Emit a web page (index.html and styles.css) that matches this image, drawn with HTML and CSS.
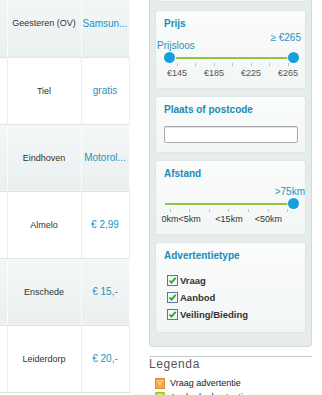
FILE: index.html
```html
<!DOCTYPE html>
<html lang="nl">
  <head>
    <meta charset="UTF-8" />
    <meta name="viewport" content="width=device-width, initial-scale=1.0" />
    <title>Advertenties</title>
    <link rel="stylesheet" href="styles.css">
  </head>
  <body>
    <div class="results">
      <table class="ads">
        <colgroup>
          <col class="col-thumb" />
          <col class="col-place" />
          <col class="col-price" />
        </colgroup>
        <tr class="odd">
          <td></td>
          <td class="place">Geesteren (OV)</td>
          <td class="price"><a href="#">Samsun...</a></td>
        </tr>
        <tr>
          <td></td>
          <td class="place">Tiel</td>
          <td class="price"><a href="#">gratis</a></td>
        </tr>
        <tr class="odd">
          <td></td>
          <td class="place">Eindhoven</td>
          <td class="price"><a href="#">Motorol...</a></td>
        </tr>
        <tr>
          <td></td>
          <td class="place">Almelo</td>
          <td class="price"><a href="#">€ 2,99</a></td>
        </tr>
        <tr class="odd">
          <td></td>
          <td class="place">Enschede</td>
          <td class="price"><a href="#">€ 15,-</a></td>
        </tr>
        <tr>
          <td></td>
          <td class="place">Leiderdorp</td>
          <td class="price"><a href="#">€ 20,-</a></td>
        </tr>
      </table>
    </div>

    <div class="side">
      <div class="filters">
        <div class="box box-top"></div>

        <!-- Prijs -->
        <div class="box">
          <h3>Prijs</h3>
          <div class="range-max">≥ €265</div>
          <div class="range-min">Prijsloos</div>
          <div class="slider price-slider">
            <div class="track"></div>
            <span class="knob knob-left"></span>
            <span class="knob knob-right"></span>
          </div>
          <div class="ticks price-ticks">
            <span></span><span></span><span></span><span></span><span></span><span></span><span></span>
          </div>
          <div class="ticks price-ticks labels grey">
            <span>€145</span><span></span><span>€185</span><span></span><span>€225</span><span></span><span>€265</span>
          </div>
        </div>

        <!-- Plaats -->
        <div class="box">
          <h3>Plaats of postcode</h3>
          <input type="text" class="place-input" />
        </div>

        <!-- Afstand -->
        <div class="box">
          <h3>Afstand</h3>
          <div class="range-max flush">&gt;75km</div>
          <div class="slider km-slider">
            <div class="track"></div>
            <span class="knob knob-right"></span>
          </div>
          <div class="ticks km-ticks">
            <span></span><span></span><span></span><span></span><span></span><span></span><span></span>
          </div>
          <div class="ticks km-ticks labels">
            <span>0km</span><span>&lt;5km</span><span></span><span>&lt;15km</span><span></span><span>&lt;50km</span><span></span>
          </div>
        </div>

        <!-- Advertentietype -->
        <div class="box">
          <h3>Advertentietype</h3>
          <ul class="checks">
            <li>
              <svg class="check" width="11" height="11" viewBox="0 0 11 11"><rect x="0.5" y="0.5" width="10" height="10" fill="#f4f6f8" stroke="#5b7893"/><path d="M2.5 5.5 L4.5 7.6 L8.6 2.8" fill="none" stroke="#2ea52e" stroke-width="1.8"/></svg>
              Vraag
            </li>
            <li>
              <svg class="check" width="11" height="11" viewBox="0 0 11 11"><rect x="0.5" y="0.5" width="10" height="10" fill="#f4f6f8" stroke="#5b7893"/><path d="M2.5 5.5 L4.5 7.6 L8.6 2.8" fill="none" stroke="#2ea52e" stroke-width="1.8"/></svg>
              Aanbod
            </li>
            <li>
              <svg class="check" width="11" height="11" viewBox="0 0 11 11"><rect x="0.5" y="0.5" width="10" height="10" fill="#f4f6f8" stroke="#5b7893"/><path d="M2.5 5.5 L4.5 7.6 L8.6 2.8" fill="none" stroke="#2ea52e" stroke-width="1.8"/></svg>
              Veiling/Bieding
            </li>
          </ul>
        </div>
      </div>

      <div class="legend">
        <h4>Legenda</h4>
        <div class="legend-item"><span class="tag tag-v">V</span>Vraag advertentie</div>
        <div class="legend-item"><span class="tag tag-a">A</span>Aanbod advertentie</div>
      </div>
    </div>
  </body>
</html>
```

FILE: styles.css
```css
body {
  margin: 0;
  font-family: "Liberation Sans", Arial, sans-serif;
  display: flex;
  align-items: flex-start;
  background: #fff;
  overflow: hidden;
}
.results {
  width: 129px;
  flex: none;
}
.ads {
  border-collapse: collapse;
  table-layout: fixed;
  width: 169px;
  margin-left: -40px;
  margin-top: -10px;
}
.col-thumb {
  width: 47px;
}
.col-place {
  width: 74px;
}
.col-price {
  width: 48px;
}
.ads tr {
  height: 67px;
}
.ads td {
  border-right: 1px solid #e9eeee;
  border-bottom: 1px solid #dfe6e6;
  text-align: center;
  vertical-align: middle;
  padding: 0;
  white-space: nowrap;
  overflow: hidden;
}
.ads tr.odd td {
  background: linear-gradient(#f5f7f7, #e9efef);
  border-right-color: #fbfcfc;
}
.place {
  font-size: 9px;
  color: #333;
}
.price {
  font-size: 10px;
}
.price a {
  color: #2593bf;
  text-decoration: none;
}

.side {
  width: 163px;
  margin-left: 20px;
  flex: none;
}
.filters {
  margin-top: -30px;
  padding: 5px 5px 6px;
  background: #e6ecea;
  border: 1px solid #d3dad8;
  border-top: none;
  border-radius: 0 0 4px 4px;
}
.box {
  background: linear-gradient(#fbfcfc, #f2f6f5);
  border: 1px solid #dfe6e4;
  border-radius: 3px;
  margin-bottom: 7px;
  padding-bottom: 9px;
}
.box-top {
  height: 25px;
  padding: 0;
  margin-bottom: 8px;
}
.box h3 {
  margin: 0;
  padding: 7px 8px 0;
  font-size: 10px;
  line-height: 12px;
  color: #1a8ab8;
}
.range-max {
  text-align: right;
  padding-right: 4px;
  margin-top: 2px;
  font-size: 10px;
  line-height: 12px;
  color: #2593bf;
}
.range-max.flush {
  padding-right: 0;
  margin-top: 6px;
}
.range-min {
  padding-left: 1px;
  margin-top: -4px;
  font-size: 10px;
  line-height: 12px;
  color: #2593bf;
}
.slider {
  position: relative;
  height: 10px;
  margin: 1px 6px 0 8px;
}
.km-slider {
  margin: 1px 6px 0 4px;
}
.track {
  position: absolute;
  left: 5px;
  right: 5px;
  top: 4px;
  height: 2px;
  background: #8dc63f;
  box-shadow: 0 1px 0 #fff;
}
.knob {
  position: absolute;
  top: -1px;
  width: 11px;
  height: 11px;
  border-radius: 50%;
  background: #14a0dd;
  box-shadow: 1px 1px 1px #fff, 0 0 0 1px rgba(255, 255, 255, 0.7);
}
.knob-left {
  left: 0;
}
.knob-right {
  right: 0;
}
.ticks {
  display: grid;
  height: 3px;
}
.ticks span {
  display: flex;
  justify-content: center;
}
.ticks:not(.labels) span::after {
  content: "";
  width: 1px;
  height: 3px;
  background: #a9cbc9;
}
.price-ticks {
  grid-template-columns: repeat(7, 18.5px);
  margin-left: 11.75px;
}
.km-ticks {
  grid-template-columns: repeat(7, 19.67px);
  margin-left: 4.2px;
}
.labels {
  height: 11px;
  margin-top: 2px;
  font-size: 9px;
  line-height: 11px;
  color: #333;
  white-space: nowrap;
}
.labels.grey {
  color: #555;
}
.place-input {
  display: block;
  box-sizing: border-box;
  width: 134px;
  height: 17px;
  margin: 10px 0 0 8px;
  border: 1px solid #a8acae;
  border-radius: 2px;
  background: #fff;
  box-shadow: inset 0 1px 1px #ddd;
  padding: 0;
}
.checks {
  list-style: none;
  margin: 10px 0 0;
  padding: 0 0 0 11px;
}
.checks li {
  display: flex;
  align-items: center;
  gap: 2px;
  height: 17px;
  font-size: 9.5px;
  font-weight: bold;
  color: #333;
}
.checks .check {
  flex: none;
}
.legend {
  margin-top: 9px;
  border-top: 1px solid #c5cccb;
}
.legend h4 {
  margin: 0;
  font-size: 12px;
  line-height: 14px;
  font-weight: normal;
  letter-spacing: 0.6px;
  color: #555;
}
.legend-item {
  display: flex;
  align-items: center;
  gap: 5px;
  margin-top: 5px;
  padding-left: 6px;
  height: 14px;
  font-size: 9px;
  color: #222;
}
.legend-item + .legend-item {
  margin-top: 0;
}
.tag {
  display: inline-flex;
  justify-content: center;
  align-items: center;
  box-sizing: border-box;
  width: 10px;
  height: 11px;
  font-size: 8px;
  line-height: 1;
}
.tag-v {
  background: #f5a84e;
  border: 1px solid #e38c33;
  color: #fde6c4;
}
.tag-a {
  background: #b9e046;
  border: 1px solid #9cc534;
  color: #effad0;
}
```
